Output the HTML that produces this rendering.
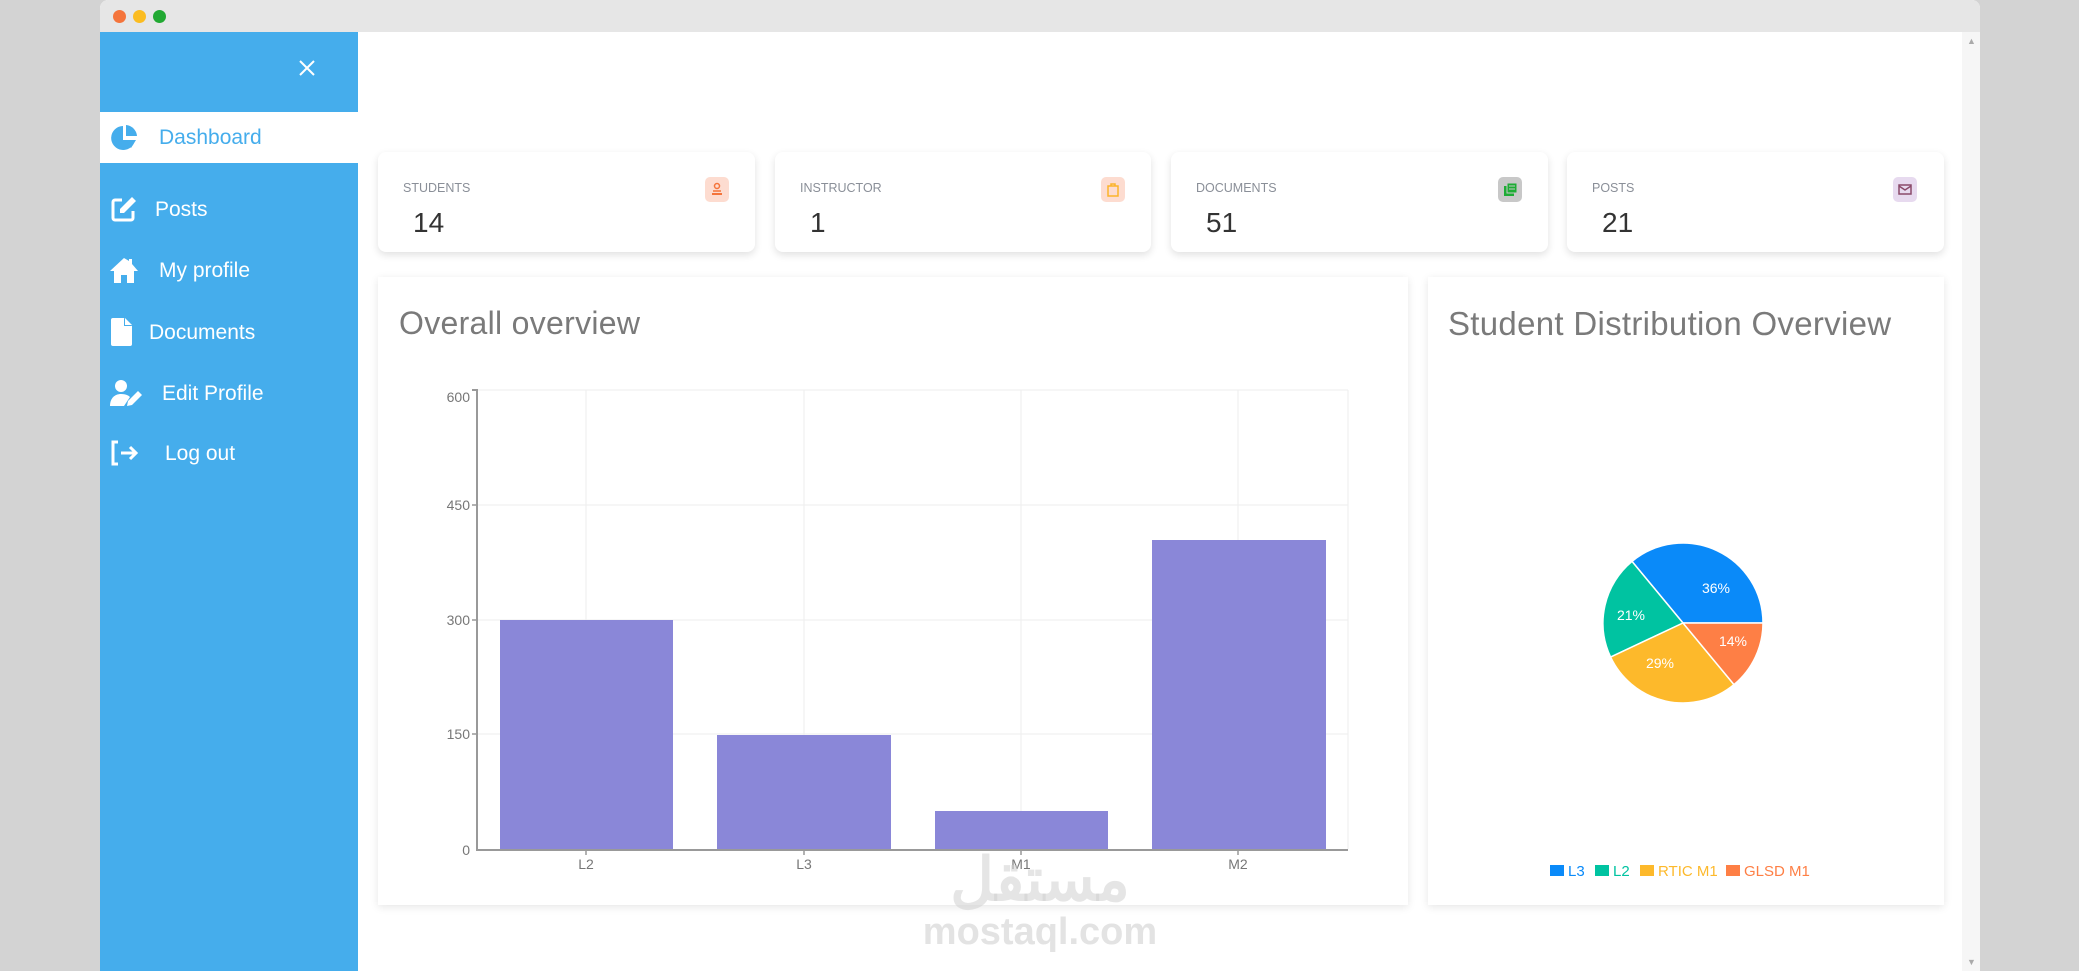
<!DOCTYPE html>
<html><head><meta charset="utf-8"><style>
*{margin:0;padding:0;box-sizing:border-box}
body{width:2079px;height:971px;background:#d3d3d3;position:relative;overflow:hidden;font-family:"Liberation Sans",sans-serif}
.a{position:absolute}
.win{left:100px;top:0;width:1880px;height:971px;background:#fff;border-radius:8px 8px 0 0;overflow:hidden}
.top{left:0;top:0;width:1880px;height:32px;background:#e6e6e6}
.dot{width:13px;height:13px;border-radius:50%;top:10px}
.side{left:100px;top:32px;width:258px;height:939px;background:#45adec}
.nav{color:#fff;font-size:21px;left:0;width:258px;height:40px;line-height:40px}
.card{background:#fff;border-radius:8px;box-shadow:0 3px 8px rgba(0,0,0,.12)}
.lbl{font-size:12.5px;color:#8a8f98;left:25px;top:29px}
.num{font-size:28px;color:#333;left:35px;top:55px}
.ib{width:24px;height:25px;border-radius:5px;top:25px}
.big{background:#fff;box-shadow:0 2px 8px rgba(0,0,0,.1)}
.h{font-size:32px;color:#7a7a7a;top:28px;left:21px;letter-spacing:0.3px}
</style></head><body>
<div class="a win">
 <div class="a top"></div>
 <div class="a dot" style="left:13px;background:#f4743b"></div>
 <div class="a dot" style="left:33px;background:#fbbc20"></div>
 <div class="a dot" style="left:53px;background:#22a933"></div>
</div>
<div class="a" style="left:1962px;top:32px;width:18px;height:939px;background:#f6f6f6"></div>
<div class="a" style="left:1967px;top:36px;font-size:9px;color:#aaa">▲</div>
<div class="a" style="left:1967px;top:957px;font-size:9px;color:#aaa">▼</div>

<div class="a side">
 <svg class="a" style="left:198px;top:27px" width="18" height="18" viewBox="0 0 18 18"><path d="M2 2L16 16M16 2L2 16" stroke="#fff" stroke-width="2"/></svg>
 <div class="a" style="left:0;top:80px;width:258px;height:51px;background:#fff"></div>
 <svg class="a" style="left:11px;top:92px" width="28" height="28" viewBox="0 0 28 28"><path d="M12 2A12 12 0 1 0 24 16H12Z" fill="#45adec"/><path d="M15 1A12 12 0 0 1 26 12H15Z" fill="#45adec"/><path d="M15 16H25L20 24Z" fill="#45adec"/></svg>
 <div class="a nav" style="top:86px;left:59px;color:#45adec">Dashboard</div>
 <svg class="a" style="left:10px;top:163px" width="28" height="28" viewBox="0 0 28 28"><path d="M12 5H5a2 2 0 0 0-2 2v16a2 2 0 0 0 2 2h16a2 2 0 0 0 2-2v-7" fill="none" stroke="#fff" stroke-width="3"/><path d="M22 2l4 4-12 12H10v-4Z" fill="#fff"/></svg>
 <div class="a nav" style="top:158px;left:55px">Posts</div>
 <svg class="a" style="left:9px;top:224px" width="30" height="28" viewBox="0 0 30 28"><path d="M15 2L1 15h4v12h7v-8h6v8h7V15h4L23 8V3h-3v2Z" fill="#fff"/></svg>
 <div class="a nav" style="top:219px;left:59px">My profile</div>
 <svg class="a" style="left:11px;top:286px" width="22" height="28" viewBox="0 0 22 28"><path d="M2 0h11l8 8v18a2 2 0 0 1-2 2H2a2 2 0 0 1-2-2V2a2 2 0 0 1 2-2Z" fill="#fff"/><path d="M13 0v8h8" fill="#45adec"/><path d="M14 0v7h7Z" fill="#fff"/></svg>
 <div class="a nav" style="top:281px;left:49px">Documents</div>
 <svg class="a" style="left:10px;top:347px" width="34" height="28" viewBox="0 0 34 28"><circle cx="11" cy="7" r="6" fill="#fff"/><path d="M0 27c0-8 5-12 11-12 4 0 7 1 9 3l-6 9Z" fill="#fff"/><path d="M28 12l4 4-10 10-5 1 1-5Z" fill="#fff"/></svg>
 <div class="a nav" style="top:342px;left:62px">Edit Profile</div>
 <svg class="a" style="left:10px;top:408px" width="30" height="26" viewBox="0 0 30 26"><path d="M8 2H3v22h5" fill="none" stroke="#fff" stroke-width="3"/><path d="M11 13h15M20 7l6 6-6 6" fill="none" stroke="#fff" stroke-width="3"/></svg>
 <div class="a nav" style="top:402px;left:65px">Log out</div>
</div>

<div class="a card" style="left:378px;top:152px;width:377px;height:100px">
 <div class="a lbl">STUDENTS</div><div class="a num">14</div>
 <div class="a ib" style="left:327px;background:#fddcd0"><svg width="24" height="25"><circle cx="12" cy="9" r="2.5" fill="none" stroke="#f4743b" stroke-width="1.5"/><path d="M7 16h10v2H7Z" fill="#f4743b"/><path d="M8 14h8" stroke="#f4743b" stroke-width="1.5"/></svg></div>
</div>
<div class="a card" style="left:775px;top:152px;width:376px;height:100px">
 <div class="a lbl">INSTRUCTOR</div><div class="a num">1</div>
 <div class="a ib" style="left:326px;background:#fddcd0"><svg width="24" height="25"><rect x="7" y="9" width="10" height="10" fill="none" stroke="#fbb42a" stroke-width="1.5"/><path d="M10 9V7h4v2" fill="none" stroke="#fbb42a" stroke-width="1.5"/></svg></div>
</div>
<div class="a card" style="left:1171px;top:152px;width:377px;height:100px">
 <div class="a lbl">DOCUMENTS</div><div class="a num">51</div>
 <div class="a ib" style="left:327px;background:#c8c8c8"><svg width="24" height="25"><rect x="6" y="9" width="10" height="10" fill="#1eac35"/><rect x="9" y="6" width="10" height="10" fill="#1eac35" stroke="#c8c8c8"/><path d="M11 9h6M11 12h6" stroke="#c8c8c8"/></svg></div>
</div>
<div class="a card" style="left:1567px;top:152px;width:377px;height:100px">
 <div class="a lbl">POSTS</div><div class="a num">21</div>
 <div class="a ib" style="left:326px;background:#e7daef"><svg width="24" height="25"><rect x="6" y="8" width="12" height="9" fill="none" stroke="#8a4a6a" stroke-width="1.5"/><path d="M6 9l6 4 6-4" fill="none" stroke="#8a4a6a" stroke-width="1.5"/></svg></div>
</div>

<div class="a big" style="left:378px;top:277px;width:1030px;height:628px">
 <div class="a h">Overall overview</div>
</div>
<div class="a big" style="left:1428px;top:277px;width:516px;height:628px">
 <div class="a h" style="left:20px;font-size:33px">Student Distribution Overview</div>
</div>

<svg class="a" style="left:0;top:0" width="2079" height="971">
 <g stroke="#eeeeee" stroke-width="1">
  <path d="M477 390H1348M477 505H1348M477 620H1348M477 734H1348"/>
  <path d="M586 390V849M804 390V849M1021 390V849M1238 390V849M1348 390V849"/>
 </g>
 <g fill="#8a87d8">
  <rect x="500" y="620" width="173" height="229"/>
  <rect x="717" y="735" width="174" height="114"/>
  <rect x="935" y="811" width="173" height="38"/>
  <rect x="1152" y="540" width="174" height="309"/>
 </g>
 <path d="M472 390H477V850H1348" fill="none" stroke="#999" stroke-width="2"/>
 <path d="M472 505H477M472 620H477M472 734H477M586 850V855M804 850V855M1021 850V855M1238 850V855" stroke="#999" stroke-width="1.5"/>
 <g font-family="Liberation Sans" font-size="14" fill="#777" text-anchor="end">
  <text x="470" y="402">600</text><text x="470" y="510">450</text><text x="470" y="625">300</text><text x="470" y="739">150</text><text x="470" y="855">0</text>
 </g>
 <g font-family="Liberation Sans" font-size="14" fill="#777" text-anchor="middle">
  <text x="586" y="869">L2</text><text x="804" y="869">L3</text><text x="1021" y="869">M1</text><text x="1238" y="869">M2</text>
 </g>
 <g stroke="#fff" stroke-width="1.5">
  <path d="M1683 623L1763 623A80 80 0 0 0 1632 561.4Z" fill="#0a8af9"/>
  <path d="M1683 623L1632 561.4A80 80 0 0 0 1610.6 657.1Z" fill="#00c3a1"/>
  <path d="M1683 623L1610.6 657.1A80 80 0 0 0 1734 684.6Z" fill="#fdb92b"/>
  <path d="M1683 623L1734 684.6A80 80 0 0 0 1763 623Z" fill="#fe7f45"/>
 </g>
 <g font-family="Liberation Sans" font-size="14" fill="#fff" text-anchor="middle">
  <text x="1716" y="593">36%</text><text x="1631" y="620">21%</text><text x="1660" y="668">29%</text><text x="1733" y="646">14%</text>
 </g>
 <g font-family="Liberation Sans" font-size="15">
  <rect x="1550" y="865" width="14" height="11" fill="#0a8af9"/><text x="1568" y="876" fill="#0a8af9">L3</text>
  <rect x="1595" y="865" width="14" height="11" fill="#00c3a1"/><text x="1613" y="876" fill="#00c3a1">L2</text>
  <rect x="1640" y="865" width="14" height="11" fill="#fdb92b"/><text x="1658" y="876" fill="#fdb92b">RTIC M1</text>
  <rect x="1726" y="865" width="14" height="11" fill="#fe7f45"/><text x="1744" y="876" fill="#fe7f45">GLSD M1</text>
 </g>
 <text x="1040" y="900" font-family="'Liberation Sans','Noto Sans CJK SC',sans-serif" font-size="60" font-weight="bold" fill="#cfcfcf" fill-opacity="0.55" text-anchor="middle">مستقل</text>
 <text x="1040" y="944" font-family="Liberation Sans" font-size="38" font-weight="bold" fill="#d0d0d0" fill-opacity="0.6" text-anchor="middle">mostaql.com</text>
</svg>
</body></html>
